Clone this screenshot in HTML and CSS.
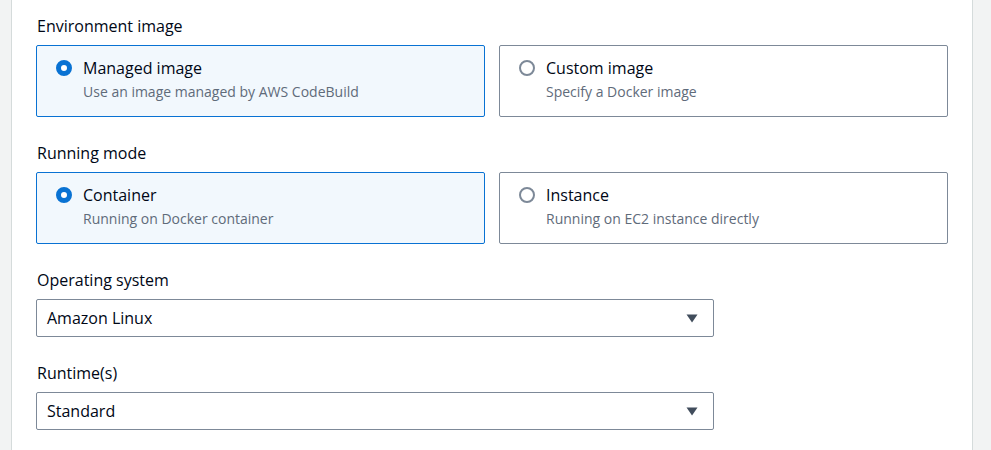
FILE: index.html
```html
<!DOCTYPE html>
<html lang="en">
<head>
<meta charset="utf-8">
<title>Environment</title>
<link rel="stylesheet" href="styles.css">
</head>
<body>
<div class="page">
  <section class="card">
    <div class="field">
      <div class="label">Environment image</div>
      <div class="tiles">
        <label class="tile selected">
          <span class="radio"></span>
          <span class="tile-text">
            <span class="tile-title">Managed image</span>
            <span class="tile-desc">Use an image managed by AWS CodeBuild</span>
          </span>
        </label>
        <label class="tile">
          <span class="radio"></span>
          <span class="tile-text">
            <span class="tile-title">Custom image</span>
            <span class="tile-desc">Specify a Docker image</span>
          </span>
        </label>
      </div>
    </div>

    <div class="field">
      <div class="label">Running mode</div>
      <div class="tiles">
        <label class="tile selected">
          <span class="radio"></span>
          <span class="tile-text">
            <span class="tile-title">Container</span>
            <span class="tile-desc">Running on Docker container</span>
          </span>
        </label>
        <label class="tile">
          <span class="radio"></span>
          <span class="tile-text">
            <span class="tile-title">Instance</span>
            <span class="tile-desc">Running on EC2 instance directly</span>
          </span>
        </label>
      </div>
    </div>

    <div class="field">
      <div class="label">Operating system</div>
      <div class="select">
        <span class="select-value">Amazon Linux</span>
        <svg class="caret" width="12" height="9" viewBox="0 0 12 9"><polygon points="0.5,0.5 11.5,0.5 6,8.5" fill="#414d5c"/></svg>
      </div>
    </div>

    <div class="field">
      <div class="label">Runtime(s)</div>
      <div class="select">
        <span class="select-value">Standard</span>
        <svg class="caret" width="12" height="9" viewBox="0 0 12 9"><polygon points="0.5,0.5 11.5,0.5 6,8.5" fill="#414d5c"/></svg>
      </div>
    </div>
  </section>
</div>
</body>
</html>
```

FILE: styles.css
```css
* { box-sizing: border-box; }

html, body {
  margin: 0;
  padding: 0;
  background: #f2f3f3;
  font-family: "Open Sans", "Noto Sans", sans-serif;
  color: #000716;
}

.page {
  padding-left: 11px;
  height: 450px;
  overflow: hidden;
}

.card {
  width: 962px;
  min-height: 450px;
  background: #ffffff;
  border-left: 1px solid #d5dbdb;
  border-right: 1px solid #d5dbdb;
  padding: 15px 24px 0 24px;
  display: flex;
  flex-direction: column;
  gap: 25px;
}

.field {
  display: flex;
  flex-direction: column;
  gap: 8px;
}

.label {
  font-size: 16px;
  line-height: 22px;
  padding-left: 1px;
}

.tiles {
  display: grid;
  grid-template-columns: 449px 449px;
  column-gap: 14px;
}

.tile {
  display: flex;
  align-items: flex-start;
  gap: 11px;
  height: 72px;
  border: 1px solid #7d8998;
  border-radius: 2px;
  padding: 11px 19px 0 19px;
  background: #ffffff;
}

.tile.selected {
  border-color: #0972d3;
  background: #f2f8fd;
}

.radio {
  flex: none;
  width: 16px;
  height: 16px;
  margin-top: 3px;
  border-radius: 50%;
  border: 2px solid #7d8998;
  background: #ffffff;
}

.tile.selected .radio {
  border: 5px solid #0972d3;
  background: #ffffff;
}

.tile-text {
  display: flex;
  flex-direction: column;
}

.tile-title {
  font-size: 16px;
  line-height: 22px;
}

.tile-desc {
  font-size: 14px;
  line-height: 20px;
  margin-top: 3px;
  color: #5f6b7a;
}

.select {
  width: 678px;
  height: 38px;
  border: 1px solid #7d8998;
  border-radius: 2px;
  display: flex;
  align-items: center;
  justify-content: space-between;
  padding: 0 15px 0 10px;
  font-size: 16px;
}

.caret { display: block; }
```
